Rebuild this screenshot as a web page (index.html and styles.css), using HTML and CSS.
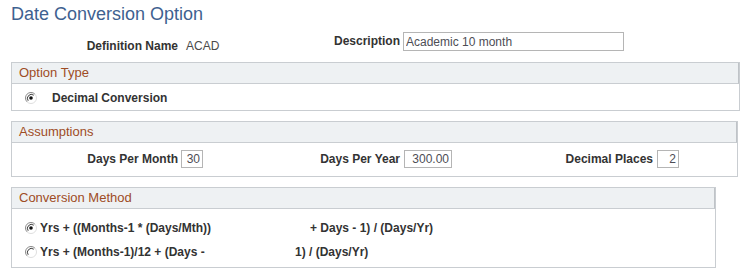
FILE: index.html
```html
<!DOCTYPE html>
<html lang="en">
<head>
<meta charset="utf-8">
<title>Date Conversion Option</title>
<link rel="stylesheet" href="styles.css">
</head>
<body>
<div class="page">
  <h1 class="title">Date Conversion Option</h1>

  <div class="row row-key">
    <div class="lbl lbl-low">Definition Name</div>
    <div class="cell cell-a"><span class="value">ACAD</span></div>
    <div class="lbl">Description</div>
    <div class="cell"><input class="field field-desc field-first" type="text" value="Academic 10 month"></div>
  </div>

  <section class="box box-option">
    <div class="box-head">Option Type</div>
    <div class="box-body body-option">
      <div class="radio-row">
        <svg class="radio" width="12" height="12" viewBox="0 0 12 12" aria-hidden="true">
          <circle cx="6" cy="6" r="5" fill="#ffffff"/>
          <path d="M9.9 2.1 A5.5 5.5 0 0 0 2.1 9.9" fill="none" stroke="#8a8a8a" stroke-width="1"/>
          <path d="M2.1 9.9 A5.5 5.5 0 0 0 9.9 2.1" fill="none" stroke="#dedede" stroke-width="1"/>
          <path d="M8.8 3.2 A4 4 0 0 0 3.2 8.8" fill="none" stroke="#404040" stroke-width="1"/>
          <circle cx="6" cy="6" r="1.8" fill="#111111"/>
        </svg>
        <span class="radio-text">Decimal Conversion</span>
      </div>
    </div>
  </section>

  <section class="box box-assump">
    <div class="box-head">Assumptions</div>
    <div class="box-body body-assump">
      <div class="row row-assump">
        <div class="lbl">Days Per Month</div>
        <div class="cell cell-a"><input class="field field-num field-first" type="text" value="30"></div>
        <div class="lbl">Days Per Year</div>
        <div class="cell cell-b"><input class="field field-num field-year" type="text" value="300.00"></div>
        <div class="lbl">Decimal Places</div>
        <div class="cell"><input class="field field-num" type="text" value="2"></div>
      </div>
    </div>
  </section>

  <section class="box box-method">
    <div class="box-head">Conversion Method</div>
    <div class="box-body body-method">
      <div class="radio-row method-row">
        <svg class="radio" width="12" height="12" viewBox="0 0 12 12" aria-hidden="true">
          <circle cx="6" cy="6" r="5" fill="#ffffff"/>
          <path d="M9.9 2.1 A5.5 5.5 0 0 0 2.1 9.9" fill="none" stroke="#8a8a8a" stroke-width="1"/>
          <path d="M2.1 9.9 A5.5 5.5 0 0 0 9.9 2.1" fill="none" stroke="#dedede" stroke-width="1"/>
          <path d="M8.8 3.2 A4 4 0 0 0 3.2 8.8" fill="none" stroke="#404040" stroke-width="1"/>
          <circle cx="6" cy="6" r="1.8" fill="#111111"/>
        </svg>
        <span class="formula formula-1">Yrs + ((Months-1 * (Days/Mth))</span>
        <span class="formula">+ Days - 1) / (Days/Yr)</span>
      </div>
      <div class="radio-row method-row">
        <svg class="radio" width="12" height="12" viewBox="0 0 12 12" aria-hidden="true">
          <circle cx="6" cy="6" r="5" fill="#ffffff"/>
          <path d="M9.9 2.1 A5.5 5.5 0 0 0 2.1 9.9" fill="none" stroke="#8a8a8a" stroke-width="1"/>
          <path d="M2.1 9.9 A5.5 5.5 0 0 0 9.9 2.1" fill="none" stroke="#dedede" stroke-width="1"/>
          <path d="M8.8 3.2 A4 4 0 0 0 3.2 8.8" fill="none" stroke="#404040" stroke-width="1"/>
        </svg>
        <span class="formula formula-2">Yrs + (Months-1)/12 + (Days -</span>
        <span class="formula">1) / (Days/Yr)</span>
      </div>
    </div>
  </section>
</div>
</body>
</html>
```

FILE: styles.css
```css
html, body {
  margin: 0;
  padding: 0;
  background: #ffffff;
}

body {
  font-family: Arial, "Liberation Sans", sans-serif;
  font-size: 12px;
  color: #333333;
}

.page {
  padding-left: 11px;
}

.title {
  margin: 0;
  padding-top: 3px;
  font-size: 18px;
  line-height: 22px;
  font-weight: normal;
  color: #3e6190;
}

.row {
  display: flex;
  align-items: flex-start;
  padding-left: 1px;
}

.row-key {
  margin-top: 7px;
  height: 24px;
}

.lbl {
  width: 166px;
  flex: none;
  text-align: right;
  font-weight: bold;
  line-height: 19px;
  color: #333333;
  white-space: nowrap;
}

.lbl-low {
  padding-top: 5px;
}

.cell {
  flex: none;
  display: flex;
  align-items: center;
}

.cell-a {
  width: 56px;
}

.cell-b {
  width: 87px;
}

.value {
  padding-left: 8px;
  padding-top: 5px;
  line-height: 19px;
  color: #4a4a4a;
}

.field {
  box-sizing: border-box;
  margin: 0 0 0 4px;
  height: 18px;
  padding: 0 2px;
  border: 1px solid #b5b5b5;
  background: #ffffff;
  font-family: Arial, "Liberation Sans", sans-serif;
  font-size: 12px;
  color: #4d4d55;
  outline: none;
}

.field-first {
  margin-left: 3px;
}

.field-desc {
  width: 221px;
  height: 19px;
}

.field-num {
  width: 22px;
  text-align: right;
}

.field-year {
  width: 48px;
}

.box {
  box-sizing: border-box;
  border: 1px solid #c9cdd1;
  background: #ffffff;
}

.box-option {
  width: 729px;
  margin-top: 6px;
}

.box-assump {
  width: 727px;
  margin-top: 10px;
}

.box-method {
  width: 705px;
  margin-top: 10px;
}

.box-head {
  height: 20px;
  line-height: 20px;
  padding-left: 7px;
  font-size: 13px;
  color: #9e4c25;
  background: #eef1f3;
  border-bottom: 1px solid #c9cdd1;
  border-right: 1px solid #bfc3c7;
}

.body-option {
  padding: 4px 0 2px;
}

.body-assump {
  padding: 7px 0 8px;
}

.body-assump .row {
  align-items: center;
  padding-left: 0;
}

.body-assump .lbl {
  line-height: 18px;
}

.body-method {
  padding: 7px 0 3px;
}

.radio-row {
  display: flex;
  align-items: center;
  padding-left: 13px;
  height: 20px;
  line-height: 20px;
  font-weight: bold;
}

.radio {
  flex: none;
  display: block;
}

.radio-text {
  margin-left: 15px;
}

.method-row {
  height: 24px;
  line-height: 24px;
}

.formula {
  white-space: nowrap;
}

.formula-1 {
  margin-left: 3px;
  width: 270px;
  flex: none;
}

.formula-2 {
  margin-left: 3px;
  width: 255px;
  flex: none;
}
```
